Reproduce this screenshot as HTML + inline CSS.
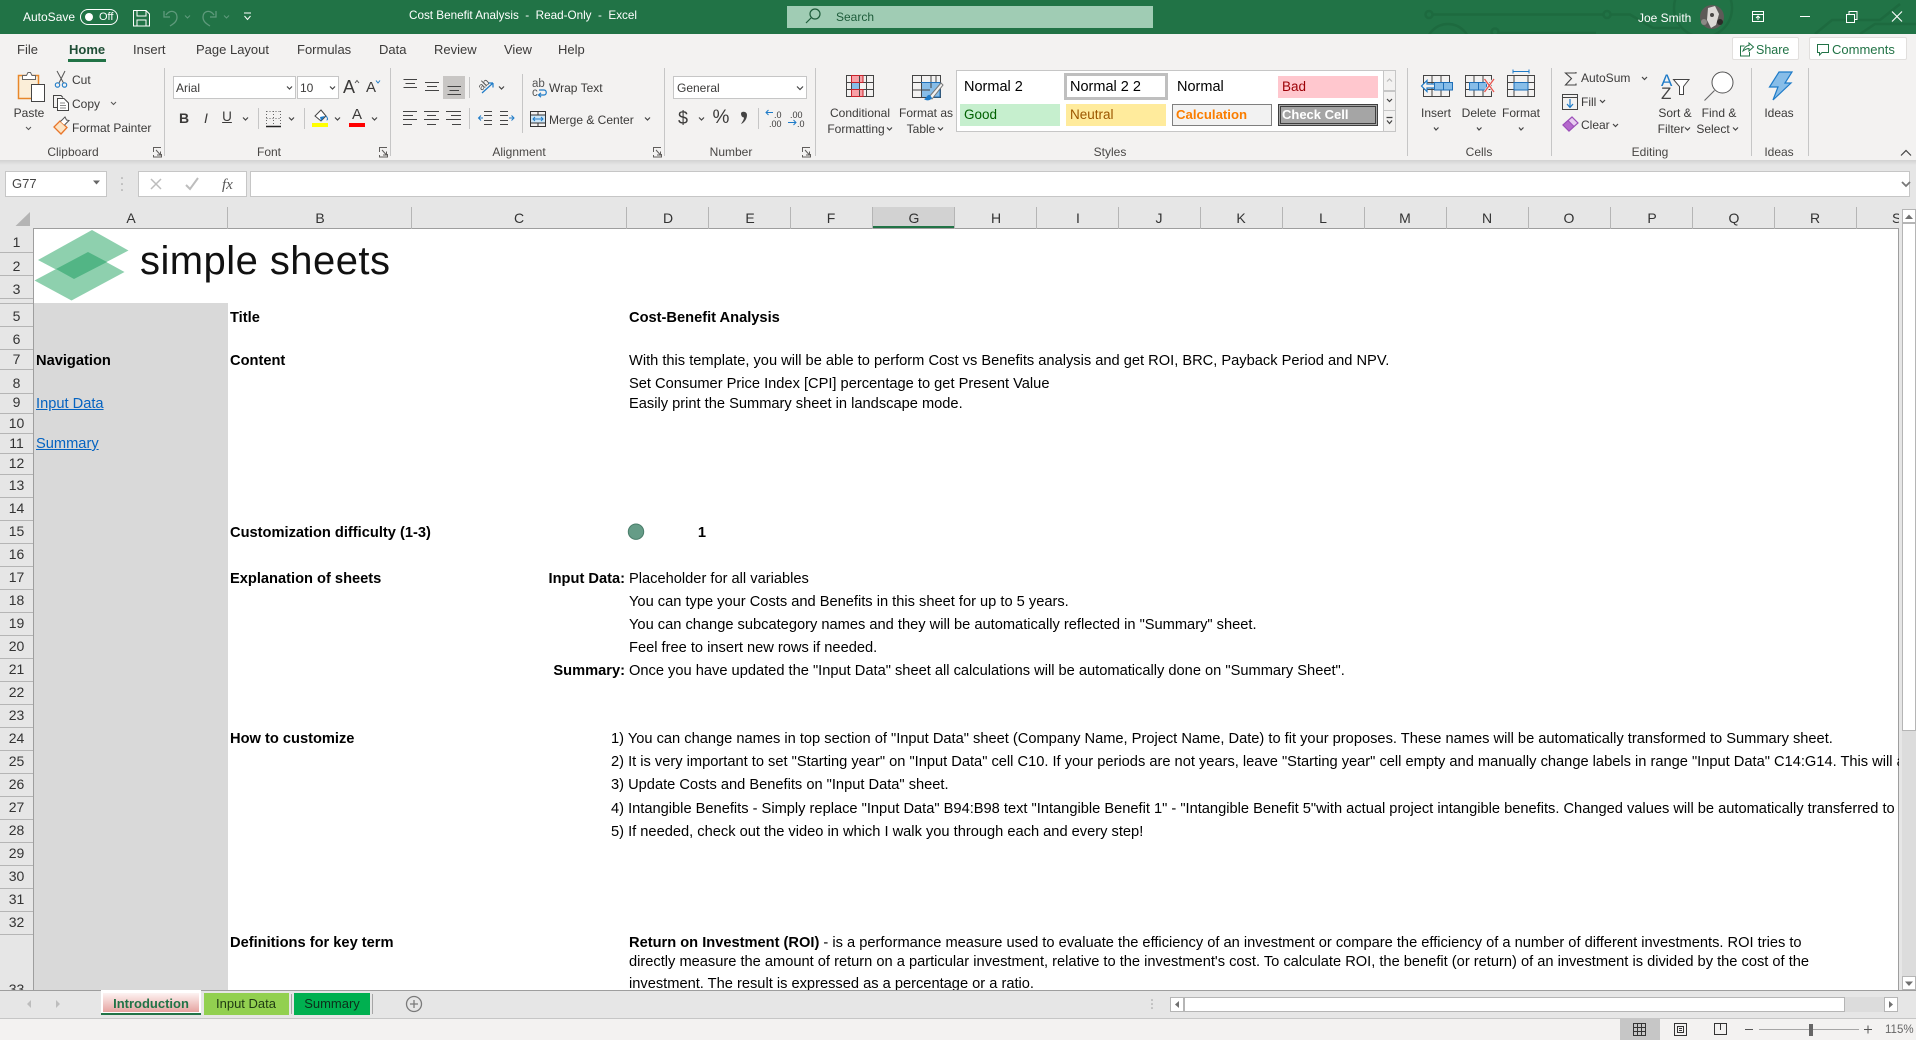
<!DOCTYPE html>
<html><head><meta charset="utf-8"><title>Cost Benefit Analysis</title>
<style>
html,body{margin:0;padding:0;width:1916px;height:1040px;overflow:hidden;background:#e6e6e6;font-family:"Liberation Sans",Arial,sans-serif}
.a{position:absolute}
.t{position:absolute;line-height:16px;white-space:nowrap;font-size:12px;color:#3b3a39}
.c{transform:translateX(-50%)}
.w{color:#fff}
.tab{font-size:13px;top:42px;color:#3b3a39}
.g{font-size:12px;top:144px;color:#484644}
.x{font-size:14.5px;color:#000}
.s{font-size:14.65px;color:#000;line-height:18px}
.h{font-size:14px;color:#333;top:210px}
.r{font-size:14px;color:#333;left:0;width:33px;text-align:center}
.box{position:absolute;background:#fff;border:1px solid #c6c6c6;box-sizing:border-box}
.sep{position:absolute;width:1px;background:#c6c6c6}
.cs{position:absolute;width:1px;top:207px;height:22px;background:#b5b5b5}
.rs{position:absolute;left:0;width:33px;height:1px;background:#b5b5b5}
</style></head><body>

<!-- title bar -->
<div class="a" style="left:0;top:0;width:1916px;height:34px;background:#217346"></div>
<svg class="a" style="left:0;top:0" width="1916" height="34" viewBox="0 0 1916 34" fill="none">
 <g stroke="#1d6a3f" stroke-width="2.5">
  <path d="M1432 14.500H1604M1610 14.500H1630L1653 28L1680 28"/>
  <circle cx="1429" cy="14.500" r="3.500"/><circle cx="1607" cy="14.500" r="3.500"/>
  <circle cx="1448" cy="46" r="22"/><circle cx="1448" cy="46" r="11"/>
  <circle cx="1495" cy="32" r="3.500"/><path d="M1498 33H1596"/>
  <circle cx="1703" cy="8" r="29"/>
  <path d="M1815 34L1832 20H1880L1900 4M1860 34L1875 24H1916"/>
 </g>
</svg>
<!-- ribbon -->
<div class="a" style="left:0;top:34px;width:1916px;height:126px;background:#f3f2f1"></div>
<div class="a" style="left:0;top:160px;width:1916px;height:5px;background:linear-gradient(#d2d2d2,#e6e6e6)"></div>
<!-- search -->
<div class="a" style="left:787px;top:6px;width:366px;height:22px;background:#a0ccb4"></div>

<!-- style gallery -->
<div class="box" style="left:956px;top:70px;width:440px;height:62px"></div>
<div class="a" style="left:960px;top:104px;width:100px;height:22px;background:#c6efce"></div>
<div class="a" style="left:1064px;top:73px;width:104px;height:27px;box-sizing:border-box;border:3px solid #bfbfbf;background:#fff"></div>
<div class="a" style="left:1066px;top:104px;width:100px;height:22px;background:#ffeb9c"></div>
<div class="a" style="left:1172px;top:104px;width:100px;height:22px;box-sizing:border-box;border:1px solid #7f7f7f;background:#f2f2f2"></div>
<div class="a" style="left:1278px;top:76px;width:100px;height:22px;background:#ffc7ce"></div>
<div class="a" style="left:1278px;top:104px;width:100px;height:22px;box-sizing:border-box;border:3px double #3f3f3f;background:#a5a5a5"></div>
<div class="box" style="left:1383px;top:70px;width:13px;height:21px;background:#f3f2f1"></div>
<div class="box" style="left:1383px;top:91px;width:13px;height:20px;background:#f3f2f1"></div>
<div class="box" style="left:1383px;top:110px;width:13px;height:22px;background:#f3f2f1"></div>

<!-- input boxes -->
<div class="box" style="left:173px;top:76px;width:123px;height:23px"></div>
<div class="box" style="left:297px;top:76px;width:42px;height:23px"></div>
<div class="box" style="left:673px;top:76px;width:134px;height:23px"></div>
<div class="a" style="left:443px;top:76px;width:22px;height:23px;background:#c8c6c4"></div>

<!-- separators -->
<div class="sep" style="left:164px;top:68px;height:88px"></div>
<div class="sep" style="left:390px;top:68px;height:88px"></div>
<div class="sep" style="left:664px;top:68px;height:88px"></div>
<div class="sep" style="left:815px;top:68px;height:88px"></div>
<div class="sep" style="left:1407px;top:68px;height:88px"></div>
<div class="sep" style="left:1551px;top:68px;height:88px"></div>
<div class="sep" style="left:1751px;top:68px;height:88px"></div>
<div class="sep" style="left:1808px;top:68px;height:88px"></div>
<div class="sep" style="left:522px;top:74px;height:59px"></div>
<div class="sep" style="left:469px;top:77px;height:21px"></div>
<div class="sep" style="left:469px;top:108px;height:21px"></div>
<div class="sep" style="left:258px;top:108px;height:21px"></div>
<div class="sep" style="left:304px;top:108px;height:21px"></div>
<div class="sep" style="left:758px;top:108px;height:21px"></div>

<!-- share / comments -->
<div class="a" style="left:1732px;top:37px;width:67px;height:23px;background:#fff;border:1px solid #e1dfdd;box-sizing:border-box;border-radius:2px"></div>
<div class="a" style="left:1809px;top:37px;width:98px;height:23px;background:#fff;border:1px solid #e1dfdd;box-sizing:border-box;border-radius:2px"></div>

<!-- formula bar -->
<div class="box" style="left:5px;top:171px;width:102px;height:26px"></div>
<div class="box" style="left:138px;top:171px;width:109px;height:26px"></div>
<div class="box" style="left:250px;top:171px;width:1660px;height:26px"></div>

<!-- grid -->
<div class="a" style="left:33px;top:228px;width:1866px;height:762px;background:#fff;box-sizing:border-box;border:1px solid #9e9e9e;border-width:1px 1px 0 1px"></div>
<div class="a" style="left:34px;top:303px;width:194px;height:687px;background:#d9d9d9"></div>
<div class="a" style="left:872px;top:207px;width:83px;height:21px;background:#d2d2d2"></div>
<div class="a" style="left:872px;top:226px;width:83px;height:2px;background:#217346"></div>

<!-- column separators -->
<div class="cs" style="left:227px"></div><div class="cs" style="left:411px"></div><div class="cs" style="left:626px"></div><div class="cs" style="left:708px"></div><div class="cs" style="left:790px"></div><div class="cs" style="left:872px"></div><div class="cs" style="left:954px"></div><div class="cs" style="left:1036px"></div><div class="cs" style="left:1118px"></div><div class="cs" style="left:1200px"></div><div class="cs" style="left:1282px"></div><div class="cs" style="left:1364px"></div><div class="cs" style="left:1446px"></div><div class="cs" style="left:1528px"></div><div class="cs" style="left:1610px"></div><div class="cs" style="left:1692px"></div><div class="cs" style="left:1774px"></div><div class="cs" style="left:1856px"></div>

<!-- column headers -->
<span class="t h c" style="left:131px">A</span><span class="t h c" style="left:320px">B</span><span class="t h c" style="left:519px">C</span><span class="t h c" style="left:668px">D</span><span class="t h c" style="left:750px">E</span><span class="t h c" style="left:831px">F</span><span class="t h c" style="left:914px">G</span><span class="t h c" style="left:996px">H</span><span class="t h c" style="left:1078px">I</span><span class="t h c" style="left:1159px">J</span><span class="t h c" style="left:1241px">K</span><span class="t h c" style="left:1323px">L</span><span class="t h c" style="left:1405px">M</span><span class="t h c" style="left:1487px">N</span><span class="t h c" style="left:1569px">O</span><span class="t h c" style="left:1652px">P</span><span class="t h c" style="left:1734px">Q</span><span class="t h c" style="left:1815px">R</span>
<div class="a" style="left:1857px;top:207px;width:42px;height:22px;overflow:hidden"><span class="t h" style="left:35px;top:3px">S</span></div>

<!-- row headers -->
<div class="a" style="left:0;top:229px;width:33px;height:761px;overflow:hidden">
<div style="position:relative;top:-229px;height:1000px">
<div class="rs" style="top:252px"></div><div class="rs" style="top:275px"></div><div class="rs" style="top:298px"></div><div class="rs" style="top:303px"></div><div class="rs" style="top:326px"></div><div class="rs" style="top:349px"></div><div class="rs" style="top:369px"></div><div class="rs" style="top:393px"></div><div class="rs" style="top:413px"></div><div class="rs" style="top:433px"></div><div class="rs" style="top:453px"></div><div class="rs" style="top:474px"></div><div class="rs" style="top:497px"></div><div class="rs" style="top:520px"></div><div class="rs" style="top:543px"></div><div class="rs" style="top:566px"></div><div class="rs" style="top:589px"></div><div class="rs" style="top:612px"></div><div class="rs" style="top:635px"></div><div class="rs" style="top:658px"></div><div class="rs" style="top:681px"></div><div class="rs" style="top:704px"></div><div class="rs" style="top:727px"></div><div class="rs" style="top:750px"></div><div class="rs" style="top:773px"></div><div class="rs" style="top:796px"></div><div class="rs" style="top:819px"></div><div class="rs" style="top:842px"></div><div class="rs" style="top:865px"></div><div class="rs" style="top:888px"></div><div class="rs" style="top:911px"></div><div class="rs" style="top:934px"></div>
<span class="t r" style="top:234px">1</span><span class="t r" style="top:258px">2</span><span class="t r" style="top:281px">3</span><span class="t r" style="top:308px">5</span><span class="t r" style="top:331px">6</span><span class="t r" style="top:351px">7</span><span class="t r" style="top:375px">8</span><span class="t r" style="top:394px">9</span><span class="t r" style="top:415px">10</span><span class="t r" style="top:435px">11</span><span class="t r" style="top:455px">12</span><span class="t r" style="top:477px">13</span><span class="t r" style="top:500px">14</span><span class="t r" style="top:523px">15</span><span class="t r" style="top:546px">16</span><span class="t r" style="top:569px">17</span><span class="t r" style="top:592px">18</span><span class="t r" style="top:615px">19</span><span class="t r" style="top:638px">20</span><span class="t r" style="top:661px">21</span><span class="t r" style="top:684px">22</span><span class="t r" style="top:707px">23</span><span class="t r" style="top:730px">24</span><span class="t r" style="top:753px">25</span><span class="t r" style="top:776px">26</span><span class="t r" style="top:799px">27</span><span class="t r" style="top:822px">28</span><span class="t r" style="top:845px">29</span><span class="t r" style="top:868px">30</span><span class="t r" style="top:891px">31</span><span class="t r" style="top:914px">32</span><span class="t r" style="top:981px">33</span>
</div></div>

<!-- cell text -->
<div class="a" style="left:34px;top:229px;width:1865px;height:761px;overflow:hidden">
<div style="position:relative;left:-34px;top:-229px;width:1916px;height:1000px">
<span class="t" style="left:140px;top:240px;font-size:40px;line-height:42px;color:#111;letter-spacing:.45px">simple sheets</span>

<span class="t s" style="left:36px;top:352px"><b>Navigation</b></span>
<span class="t s" style="left:36px;top:395px;color:#0563c1;text-decoration:underline">Input Data</span>
<span class="t s" style="left:36px;top:435px;color:#0563c1;text-decoration:underline">Summary</span>

<span class="t s" style="left:230px;top:309px"><b>Title</b></span>
<span class="t s" style="left:230px;top:352px"><b>Content</b></span>
<span class="t s" style="left:230px;top:524px"><b>Customization difficulty (1-3)</b></span>
<span class="t s" style="left:230px;top:570px"><b>Explanation of sheets</b></span>
<span class="t s" style="left:230px;top:730px"><b>How to customize</b></span>
<span class="t s" style="left:230px;top:934px"><b>Definitions for key term</b></span>

<span class="t s" style="left:629px;top:309px"><b>Cost-Benefit Analysis</b></span>
<span class="t s" style="left:629px;top:352px">With this template, you will be able to perform Cost vs Benefits analysis and get ROI, BRC, Payback Period and NPV.</span>
<span class="t s" style="left:629px;top:375px">Set Consumer Price Index [CPI] percentage to get Present Value</span>
<span class="t s" style="left:629px;top:395px">Easily print the Summary sheet in landscape mode.</span>
<span class="t s c" style="left:702px;top:524px"><b>1</b></span>

<span class="t s" style="right:1291px;top:570px"><b>Input Data:</b></span>
<span class="t s" style="left:629px;top:570px">Placeholder for all variables</span>
<span class="t s" style="left:629px;top:593px">You can type your Costs and Benefits in this sheet for up to 5 years.</span>
<span class="t s" style="left:629px;top:616px">You can change subcategory names and they will be automatically reflected in "Summary" sheet.</span>
<span class="t s" style="left:629px;top:639px">Feel free to insert new rows if needed.</span>
<span class="t s" style="right:1291px;top:662px"><b>Summary:</b></span>
<span class="t s" style="left:629px;top:662px">Once you have updated the "Input Data" sheet all calculations will be automatically done on "Summary Sheet".</span>

<span class="t s" style="left:611px;top:730px">1) You can change names in top section of "Input Data" sheet (Company Name, Project Name, Date) to fit your proposes. These names will be automatically transformed to Summary sheet.</span>
<span class="t s" style="left:611px;top:753px">2) It is very important to set "Starting year" on "Input Data" cell C10. If your periods are not years, leave "Starting year" cell empty and manually change labels in range "Input Data" C14:G14. This will automatically</span>
<span class="t s" style="left:611px;top:776px">3) Update Costs and Benefits on "Input Data" sheet.</span>
<span class="t s" style="left:611px;top:800px">4) Intangible Benefits - Simply replace "Input Data" B94:B98 text "Intangible Benefit 1" - "Intangible Benefit 5"with actual project intangible benefits. Changed values will be automatically transferred to "Summary" sheet.</span>
<span class="t s" style="left:611px;top:823px">5) If needed, check out the video in which I walk you through each and every step!</span>

<span class="t s" style="left:629px;top:934px"><b>Return on Investment (ROI)</b> - is a performance measure used to evaluate the efficiency of an investment or compare the efficiency of a number of different investments. ROI tries to</span>
<span class="t s" style="left:629px;top:953px">directly measure the amount of return on a particular investment, relative to the investment's cost. To calculate ROI, the benefit (or return) of an investment is divided by the cost of the</span>
<span class="t s" style="left:629px;top:975px">investment. The result is expressed as a percentage or a ratio.</span>
</div></div>

<!-- scrollbars & tab bar -->
<div class="a" style="left:1902px;top:209px;width:14px;height:781px;background:#dcdcdc"></div>
<div class="a" style="left:1902px;top:209px;width:14px;height:14px;background:#fff;border:1px solid #b5b5b5;box-sizing:border-box"></div>
<div class="a" style="left:1902px;top:223px;width:14px;height:508px;background:#fff;border:1px solid #b5b5b5;box-sizing:border-box"></div>
<div class="a" style="left:1902px;top:976px;width:14px;height:14px;background:#fff;border:1px solid #b5b5b5;box-sizing:border-box"></div>
<div class="a" style="left:0;top:990px;width:1916px;height:1px;background:#9e9e9e"></div>
<div class="a" style="left:0;top:991px;width:1916px;height:27px;background:#e6e6e6"></div>
<div class="a" style="left:0;top:1018px;width:1916px;height:1px;background:#c6c6c6"></div>
<div class="a" style="left:0;top:1019px;width:1916px;height:21px;background:#f3f2f1"></div>
<div class="a" style="left:1620px;top:1019px;width:40px;height:21px;background:#c6c6c6"></div>

<div class="a" style="left:101px;top:990px;width:100px;height:25px;background:#fff;border-bottom:2px solid #217346;box-sizing:border-box"></div>
<div class="a" style="left:103px;top:993px;width:96px;height:19px;background:linear-gradient(#fdf3f2,#e6a3a0)"></div>
<div class="a" style="left:204px;top:993px;width:85px;height:22px;background:#92d050"></div>
<div class="a" style="left:294px;top:993px;width:76px;height:22px;background:#00b050"></div>
<div class="a" style="left:291px;top:994px;width:1px;height:20px;background:#a6a6a6"></div>
<div class="a" style="left:372px;top:994px;width:1px;height:20px;background:#a6a6a6"></div>
<span class="t c" style="left:151px;top:996px;font-weight:bold;color:#217346;font-size:13px">Introduction</span>
<span class="t c" style="left:246px;top:996px;color:#1f3a12;font-size:13px">Input Data</span>
<span class="t c" style="left:332px;top:996px;color:#0c2e1a;font-size:13px">Summary</span>

<div class="a" style="left:1170px;top:997px;width:14px;height:15px;background:#fff;border:1px solid #b5b5b5;box-sizing:border-box"></div>
<div class="a" style="left:1184px;top:997px;width:661px;height:15px;background:#fff;border:1px solid #b5b5b5;box-sizing:border-box"></div>
<div class="a" style="left:1845px;top:997px;width:39px;height:15px;background:#dcdcdc"></div>
<div class="a" style="left:1884px;top:997px;width:14px;height:15px;background:#fff;border:1px solid #b5b5b5;box-sizing:border-box"></div>

<!-- all icons -->
<svg class="a" style="left:0;top:0" width="1916" height="1040" viewBox="0 0 1916 1040" fill="none">
 <!-- autosave toggle -->
 <rect x="80.500" y="9.500" width="37" height="15" rx="7.500" stroke="#fff"/>
 <circle cx="89" cy="17" r="4" fill="#fff"/>
 <!-- save -->
 <path d="M133.500 10.500H146L149.500 14V26H133.500ZM137 10.500V16H146V10.500M137 26V20H146V26" stroke="#fff"/>
 <!-- undo redo -->
 <path d="M166 15C170 9 177 11 177 17C177 22 173 24 170 26M164 11V17H170" stroke="#5f9a7c" stroke-width="1.300"/>
 <path d="M214 15C210 9 203 11 203 17C203 22 207 24 210 26M216 11V17H210" stroke="#5f9a7c" stroke-width="1.300"/>
 <path d="M185 15.500L187.500 18L190 15.500M224 15.500L226.500 18L229 15.500" stroke="#5f9a7c"/>
 <path d="M244 13H251M244.500 16L247.500 19.500L250.500 16" stroke="#fff"/>
 <!-- search icon -->
 <circle cx="815" cy="14" r="5" stroke="#1d5c3a" stroke-width="1.200"/><path d="M811 18L806 23" stroke="#1d5c3a" stroke-width="1.200"/>
 <!-- avatar -->
 <circle cx="1712" cy="17" r="12" fill="#5d5a58"/>
 <path d="M1708 8L1715 6L1719 14L1716 25L1711 28L1707 20Z" fill="#dcd9d6"/>
 <circle cx="1704" cy="22" r="3" fill="#8c8986"/><circle cx="1720" cy="22" r="3" fill="#2c2a28"/><circle cx="1712" cy="15" r="2" fill="#4a4846"/>
 <!-- window controls -->
 <path d="M1752.500 11.500H1763.500V21.500H1752.500ZM1752.500 14.500H1763.500M1758 20V16M1756 18L1758 16L1760 18" stroke="#fff"/>
 <path d="M1800 16.500H1810" stroke="#fff"/>
 <path d="M1846.500 14.500H1854.500V22.500H1846.500ZM1849 14V11.500H1857V19.500H1855" stroke="#fff"/>
 <path d="M1892 11.500L1902 21.500M1902 11.500L1892 21.500" stroke="#fff" stroke-width="1.100"/>
 <!-- share / comments icons -->
 <path d="M1744.500 46H1740.500V56H1749.500V52M1743 51C1744 47.500 1746.500 45.500 1749 45.500V43L1753.500 47L1749 51V48.500C1746.500 48.500 1745 49.500 1743 51Z" stroke="#217346"/>
 <path d="M1817.500 44.500H1828.500V52.500H1822L1819.500 55V52.500H1817.500Z" stroke="#217346"/>

 <!-- paste -->
 <rect x="18.500" y="75.500" width="20" height="23" fill="#fbeed8" stroke="#e8872a" stroke-width="1.500"/>
 <rect x="31.500" y="84.500" width="13" height="17" fill="#fff" stroke="#444"/>
 <path d="M22.500 79.500V75.500H26.500L28 72.500H30.500L32 75.500H35.500V79.500Z" fill="#fff" stroke="#666"/>
 <path d="M26 127L28.500 129.500L31 127" stroke="#555"/>
 <!-- scissors -->
 <path d="M57 71L63.500 83M65 71L59 83" stroke="#555"/>
 <circle cx="57.500" cy="85" r="2.200" stroke="#1e7bc8" stroke-width="1.100"/><circle cx="64.500" cy="85" r="2.200" stroke="#1e7bc8" stroke-width="1.100"/>
 <!-- copy -->
 <path d="M57 107.500H53.500V95.500H61L63 97.500" stroke="#444"/>
 <path d="M57.500 98.500H64L68.500 103V110.500H57.500Z" fill="#fff" stroke="#444"/>
 <path d="M60 103H65M60 105.500H66M60 108H66" stroke="#888"/>
 <path d="M111 102L113.500 104.500L116 102" stroke="#555"/>
 <!-- format painter -->
 <path d="M54 127L60 121L67 127.500L61 134Z" fill="#fce4c5" stroke="#e8762a" stroke-width="1.300"/>
 <path d="M60.500 121.500L65 117L66.500 120L69 120.500L64.500 125" fill="#fff" stroke="#555"/>
 <!-- launchers -->
 <g stroke="#605e5c">
  <path d="M153.500 152V147.500H161M156 150L160.500 155M160.500 151.500V155H157M161.500 154V157H153.500V155"/>
  <path d="M379.500 152V147.500H387M382 150L386.500 155M386.500 151.500V155H383M387.500 154V157H379.500V155"/>
  <path d="M653.500 152V147.500H661M656 150L660.500 155M660.500 151.500V155H657M661.500 154V157H653.500V155"/>
  <path d="M802.500 152V147.500H810M805 150L809.500 155M809.500 151.500V155H806M810.500 154V157H802.500V155"/>
 </g>
 <!-- dropdown chevrons -->
 <g stroke="#444" stroke-width="1.200">
  <path d="M287 86.500L289.500 89L292 86.500"/>
  <path d="M330 86.500L332.500 89L335 86.500"/>
  <path d="M797 86.500L800 89.500L803 86.500"/>
  <path d="M243 117.500L245.500 120L248 117.500"/>
  <path d="M289 117.500L291.500 120L294 117.500"/>
  <path d="M335 117.500L337.500 120L340 117.500"/>
  <path d="M372 117.500L374.500 120L377 117.500"/>
  <path d="M499 86.500L501.500 89L504 86.500"/>
  <path d="M645 117.500L647.500 120L650 117.500"/>
  <path d="M699 117.500L701.500 120L704 117.500"/>
  <path d="M887 127.500L889.500 130L892 127.500"/>
  <path d="M938 127.500L940.500 130L943 127.500"/>
  <path d="M1434 127.500L1436 130L1438.500 127.500"/>
  <path d="M1477 127.500L1479 130L1481.500 127.500"/>
  <path d="M1519 127.500L1521 130L1523.500 127.500"/>
  <path d="M1642 77L1644.500 79.500L1647 77"/>
  <path d="M1600 100L1602.500 102.500L1605 100"/>
  <path d="M1613 124L1615.500 126.500L1618 124"/>
  <path d="M1685 127.500L1687.500 130L1690 127.500"/>
  <path d="M1733 127.500L1735.500 130L1738 127.500"/>
 </g>
 <path d="M1901 155.500L1906 150.500L1911 155.500" stroke="#444" stroke-width="1.200"/>
 <!-- font grow / shrink -->
 <path d="M355 83L357 80.500L359 83" stroke="#555"/><path d="M376 80.500L378 83L380 80.500" stroke="#1e7bc8"/>
 <!-- border icon -->
 <path d="M266.500 111V126M280.500 111V126M266.500 111.500H281M266.500 118.500H281M273.500 111V126" stroke="#666" stroke-dasharray="1 2"/>
 <path d="M266 126.500H281" stroke="#222" stroke-width="1.500"/>
 <!-- fill color -->
 <path d="M315 116L321 110L326 116L321 121Z" fill="#fff" stroke="#444"/><path d="M320 117L325 116L321 121Z" fill="#1e7bc8"/><path d="M326 116C328 118 328 120 326.500 120" stroke="#1e7bc8"/>
 <rect x="312" y="123" width="16" height="4" fill="#ff0"/>
 <rect x="349" y="123" width="16" height="4" fill="#f00"/>
 <!-- alignment -->
 <g stroke="#444" stroke-width="1.100">
  <path d="M403.500 79.500H417M405.500 83.500H415M403.500 87.500H417"/>
  <path d="M425 82.500H439M427 86.500H437M425 90.500H439"/>
  <path d="M447.500 86.500H461M449.500 90.500H459M447.500 94.500H461"/>
  <path d="M403 111.500H417M403 115.500H413M403 119.500H417M403 124.500H412"/>
  <path d="M424 111.500H439M427 115.500H436M424 119.500H439M427 124.500H436"/>
  <path d="M446 111.500H461M451 115.500H461M446 119.500H461M452 124.500H461"/>
  <path d="M484 111.500H492M484 115.500H492M484 120.500H492M484 124.500H492"/>
  <path d="M506 111.500H514M506 115.500H514M506 120.500H514M506 124.500H514" transform="translate(-6,0)"/>
 </g>
 <path d="M483 118H478.500M481 115.500L478.500 118L481 120.500" stroke="#1e7bc8"/>
 <path d="M509 118H514M511.500 115.500L514 118L511.500 120.500" stroke="#1e7bc8"/>
 <!-- orientation -->
 <path d="M482 93L493 83M493 83H488.500M493 83V87.500" stroke="#1e7bc8" stroke-width="1.200"/>
 <text x="478" y="90" font-family="Liberation Sans" font-size="10.500" fill="#555" transform="rotate(-45 481 86)">ab</text>
 <!-- wrap text -->
 <text x="532" y="87" font-family="Liberation Sans" font-size="11.500" fill="#555">ab</text>
 <text x="532" y="96" font-family="Liberation Sans" font-size="11.500" fill="#555">c</text>
 <path d="M539 90H544C547 90 547 95 544 95H539M541 92.800L538.500 95L541 97.200" stroke="#1e7bc8" stroke-width="1.200"/>
 <!-- merge -->
 <rect x="530.500" y="111.500" width="15" height="15" stroke="#333"/><rect x="531" y="115" width="14" height="8" fill="#cde6f7"/>
 <path d="M531 115H545M531 123H545M538 112V115M538 123V126" stroke="#333"/>
 <path d="M533 119H543M535 117L533 119L535 121M541 117L543 119L541 121" stroke="#1e7bc8"/>
 <!-- comma -->
 <path d="M741 113.500C741 111 747 111 747 115C747 119 744 123 741 124C743 121 744 119 744 117.500C742 117.500 741 115.500 741 113.500Z" fill="#444"/>
 <!-- decimal arrows -->
 <path d="M766 112.500H773M768.500 110L766 112.500L768.500 115" stroke="#1e7bc8"/>
 <path d="M788 122.500H796M793.500 120L796 122.500L793.500 125" stroke="#1e7bc8"/>
 <!-- conditional formatting -->
 <g>
  <rect x="851" y="75" width="12" height="7.500" fill="#f8a0a6"/><rect x="851" y="89.500" width="12" height="7.500" fill="#f8a0a6"/><rect x="851" y="82.500" width="8" height="7" fill="#87bde8"/>
  <path d="M846.500 75.500H873.500V96.500H846.500ZM846.500 82.500H873.500M846.500 89.500H873.500M851.500 75.500V96.500M859.500 75.500V96.500M866.500 75.500V96.500" stroke="#444"/>
  <path d="M851.500 75.500H863V82.500H851.500ZM851.500 89.500H863V96.500H851.500Z" stroke="#c8232c"/>
 </g>
 <!-- format as table -->
 <g>
  <rect x="921" y="82" width="19" height="15" fill="#87bde8"/>
  <path d="M912.500 75.500H940.500V97.500H912.500ZM912.500 82.500H940.500M912.500 90H930M921.500 75.500V97.500M931 75.500V88M936 75.500V82" stroke="#444"/>
  <path d="M921 82.500H940M940 82.500V97H931" stroke="#1e6fb8"/>
  <path d="M929 97L941 83L943 85L932 99Z" fill="#f3f2f1" stroke="#777"/>
  <path d="M924 99C927 98 927 94 930 95L932 98C930 101 926 101 924 99Z" fill="#1e7bc8"/>
 </g>
 <!-- gallery arrows -->
 <path d="M1387 81.500L1389.500 79L1392 81.500" stroke="#bbb" stroke-width="1.200"/>
 <path d="M1387 99L1389.500 101.500L1392 99" stroke="#444" stroke-width="1.200"/>
 <path d="M1386.500 117.500H1392.500M1387 120.500L1389.500 123.500L1392 120.500" stroke="#444" stroke-width="1.200"/>
 <!-- insert -->
 <path d="M1423.500 75.500H1449.500V96.500H1423.500ZM1423.500 82.500H1449.500M1423.500 89.500H1449.500M1432 75.500V96.500M1441 75.500V96.500" stroke="#444"/>
 <rect x="1434.500" y="82.500" width="18" height="7.500" fill="#87bde8" stroke="#1e6fb8"/><path d="M1443.500 82V90" stroke="#1e6fb8"/>
 <path d="M1434 84H1427V80.500L1421.500 86L1427 91.500V88H1434" stroke="#1e7bc8" stroke-width="1.200" fill="#f3f2f1"/>
 <!-- delete -->
 <path d="M1465.500 75.500H1491.500V96.500H1465.500ZM1465.500 82.500H1491.500M1465.500 89.500H1491.500M1474 75.500V96.500M1483 75.500V96.500" stroke="#444"/>
 <rect x="1469.500" y="82.500" width="17" height="7.500" fill="#87bde8" stroke="#1e6fb8"/><path d="M1478.500 82.500V90" stroke="#1e6fb8"/>
 <path d="M1485 79L1494 92M1494 79L1485 92" stroke="#f3f2f1" stroke-width="3"/>
 <path d="M1484.500 79L1494 92M1494 79L1484.500 92" stroke="#e8544f" stroke-width="1.300"/>
 <!-- format -->
 <path d="M1507.500 75.500H1534.500V96.500H1507.500ZM1507.500 82.500H1534.500M1507.500 89.500H1534.500M1514 75.500V96.500M1528 75.500V96.500" stroke="#444"/>
 <rect x="1514" y="82.500" width="14" height="7.500" fill="#87bde8" stroke="#1e6fb8"/>
 <path d="M1513 71.500H1529M1513 69.500V73.500M1529 69.500V73.500" stroke="#1e7bc8"/>
 <!-- sigma -->
 <path d="M1576 72V73H1565.500L1571.500 78.500L1565.500 85H1576V83.500" stroke="#444" stroke-width="1.100"/>
 <!-- fill -->
 <path d="M1562.500 94.500H1577.500V109.500H1562.500ZM1562.500 97.500H1577.500" stroke="#444"/>
 <path d="M1570 99V107M1567 104L1570 107.500L1573 104" stroke="#1e7bc8" stroke-width="1.200"/>
 <!-- clear -->
 <path d="M1563 125L1572 117L1578 123L1569 131Z" fill="#e8cdf0" stroke="#9b4fb8" stroke-width="1.200"/>
 <path d="M1563 125L1568 120.500L1574 126.500L1569 131Z" fill="#b468cc" stroke="#9b4fb8"/>
 <!-- sort & filter -->
 <text x="1661" y="86" font-family="Liberation Sans" font-size="17" fill="#1e7bc8">A</text>
 <text x="1661" y="99" font-family="Liberation Sans" font-size="17" fill="#444">Z</text>
 <path d="M1673.500 79.500H1689L1683.500 86.500V94.500H1679.500V86.500Z" stroke="#444" fill="#fff"/>
 <!-- find -->
 <circle cx="1722.500" cy="82.500" r="10.500" stroke="#555" fill="#fff"/>
 <path d="M1714.500 90.500L1704.500 100.500" stroke="#666" stroke-width="1.100"/>
 <!-- ideas -->
 <path d="M1779 72H1792L1785 83H1791L1773 100L1778 87H1769.500Z" fill="#87bde8" stroke="#1e7bc8" stroke-width="1.200"/>
 <!-- name box / formula -->
 <path d="M93 180.500H100L96.500 184.500Z" fill="#666"/>
 <circle cx="122" cy="178" r=".8" fill="#999"/><circle cx="122" cy="184" r=".8" fill="#999"/><circle cx="122" cy="190" r=".8" fill="#999"/>
 <path d="M151 179L161 189M161 179L151 189" stroke="#bdbdbd" stroke-width="1.500"/>
 <path d="M186 185L190 189L198 178" stroke="#bdbdbd" stroke-width="2"/>
 <text x="222" y="189" font-family="Liberation Serif" font-style="italic" font-size="15" fill="#555">fx</text>
 <path d="M1902 182L1906 186L1910 182" stroke="#777" stroke-width="1.800"/>
 <!-- corner -->
 <path d="M15.500 226H30V212Z" fill="#b4b4b4"/>
 <!-- logo -->
 <path d="M92 230L128.500 250.500L74 279L38 260Z" fill="#8ed0ae"/>
 <path d="M88 252L124.500 272L71.500 300.500L34.500 280.500Z" fill="#8ed0ae"/>
 <path d="M88 252L107 262L74 279L56 269Z" fill="#52b585"/>
 <!-- circle -->
 <circle cx="636" cy="531.700" r="7.700" fill="#659c87" stroke="#4a7d6a"/>
 <!-- scroll arrows -->
 <path d="M1905 219H1913L1909 214.500Z" fill="#707070"/>
 <path d="M1905 981.500H1913L1909 986Z" fill="#707070"/>
 <path d="M1179 1001L1175 1004.500L1179 1008Z" fill="#707070"/>
 <path d="M1889 1001L1893 1004.500L1889 1008Z" fill="#707070"/>
 <!-- sheet nav -->
 <path d="M31 1000L27 1004L31 1008Z" fill="#bdbdbd"/><path d="M56 1000L60 1004L56 1008Z" fill="#bdbdbd"/>
 <circle cx="414" cy="1004" r="7.500" stroke="#7a7a7a" stroke-width="1.300"/><path d="M410 1004H418M414 1000V1008" stroke="#7a7a7a" stroke-width="1.300"/>
 <g fill="#9a9a9a"><circle cx="1152" cy="1000" r=".8"/><circle cx="1152" cy="1004" r=".8"/><circle cx="1152" cy="1008" r=".8"/></g>
 <!-- status icons -->
 <path d="M1633.500 1023.500H1645.500V1035.500H1633.500ZM1633.500 1027.500H1645.500M1633.500 1031.500H1645.500M1637.500 1023.500V1035.500M1641.500 1023.500V1035.500" stroke="#333"/>
 <path d="M1674.500 1023.500H1686.500V1035.500H1674.500ZM1677.500 1026.500H1683.500V1032.500H1677.500ZM1679 1028.500H1682M1679 1030.500H1682" stroke="#333"/>
 <path d="M1714.500 1023.500H1726.500V1034.500H1714.500ZM1720.500 1023.500V1030" stroke="#333"/>
 <path d="M1745 1029.500H1753M1864 1029.500H1872M1868 1025.500V1033.500" stroke="#555"/>
 <path d="M1759 1029.500H1859" stroke="#a6a6a6"/>
 <rect x="1809" y="1024" width="4" height="12" fill="#666"/>
</svg>

<!-- text: title bar -->
<span class="t w" style="left:23px;top:9px;font-size:12px">AutoSave</span>
<span class="t w" style="left:99px;top:9px;font-size:11px">Off</span>
<span class="t w" style="left:409px;top:8px;font-size:11.700px;white-space:pre">Cost Benefit Analysis  -  Read-Only  -  Excel</span>
<span class="t" style="left:836px;top:9px;font-size:12px;color:#1d5c3a">Search</span>
<span class="t w" style="left:1638px;top:10px;font-size:12px">Joe Smith</span>

<!-- tabs -->
<span class="t tab" style="left:17px">File</span>
<span class="t tab" style="left:69px;color:#1f4e36;font-weight:600">Home</span>
<span class="t tab" style="left:133px">Insert</span>
<span class="t tab" style="left:196px">Page Layout</span>
<span class="t tab" style="left:297px">Formulas</span>
<span class="t tab" style="left:379px">Data</span>
<span class="t tab" style="left:434px">Review</span>
<span class="t tab" style="left:504px">View</span>
<span class="t tab" style="left:558px">Help</span>
<div class="a" style="left:68px;top:59px;width:38px;height:3px;background:#217346"></div>
<span class="t" style="left:1756px;top:42px;font-size:12.500px;color:#217346">Share</span>
<span class="t" style="left:1832px;top:42px;font-size:13px;color:#217346">Comments</span>

<!-- ribbon text -->
<span class="t c" style="left:29px;top:105px">Paste</span>
<span class="t" style="left:72px;top:72px">Cut</span>
<span class="t" style="left:72px;top:96px">Copy</span>
<span class="t" style="left:72px;top:120px">Format Painter</span>
<span class="t" style="left:176px;top:80px">Arial</span>
<span class="t" style="left:300px;top:80px">10</span>
<span class="t" style="left:343px;top:79px;font-size:18px">A</span>
<span class="t" style="left:366px;top:80px;font-size:15px">A</span>
<span class="t c" style="left:184px;top:110px;font-size:14px;font-weight:bold">B</span>
<span class="t c" style="left:206px;top:110px;font-size:14px;font-style:italic">I</span>
<span class="t c" style="left:227px;top:109px;font-size:13.500px;text-decoration:underline">U</span>
<span class="t" style="left:352px;top:107px;font-size:15px">A</span>
<span class="t" style="left:549px;top:80px">Wrap Text</span>
<span class="t" style="left:549px;top:112px">Merge &amp; Center</span>
<span class="t" style="left:677px;top:80px">General</span>
<span class="t c" style="left:683px;top:110px;font-size:18px">$</span>
<span class="t c" style="left:721px;top:110px;font-size:19px">%</span>
<span class="t" style="left:774px;top:107px;font-size:9px">.0</span>
<span class="t" style="left:769px;top:116px;font-size:9px">.00</span>
<span class="t" style="left:790px;top:107px;font-size:9px">.00</span>
<span class="t" style="left:797px;top:116px;font-size:9px">.0</span>
<span class="t c" style="left:860px;top:105px">Conditional</span>
<span class="t c" style="left:856px;top:121px">Formatting</span>
<span class="t c" style="left:926px;top:105px">Format as</span>
<span class="t c" style="left:921px;top:121px">Table</span>

<span class="t x" style="left:964px;top:79px">Normal 2</span>
<span class="t x" style="left:1070px;top:79px">Normal 2 2</span>
<span class="t x" style="left:1177px;top:79px">Normal</span>
<span class="t" style="left:1282px;top:79px;font-size:13.500px;color:#9c0006">Bad</span>
<span class="t" style="left:964px;top:107px;font-size:13.500px;color:#006100">Good</span>
<span class="t" style="left:1070px;top:107px;font-size:13.500px;color:#9c5700">Neutral</span>
<span class="t" style="left:1176px;top:107px;font-size:13.200px;font-weight:bold;color:#fa7d00">Calculation</span>
<span class="t" style="left:1282px;top:107px;font-size:13px;font-weight:bold;color:#fff">Check Cell</span>

<span class="t c" style="left:1436px;top:105px">Insert</span>
<span class="t c" style="left:1479px;top:105px">Delete</span>
<span class="t c" style="left:1521px;top:105px">Format</span>
<span class="t" style="left:1581px;top:70px">AutoSum</span>
<span class="t" style="left:1581px;top:94px">Fill</span>
<span class="t" style="left:1581px;top:117px">Clear</span>
<span class="t c" style="left:1675px;top:105px">Sort &amp;</span>
<span class="t c" style="left:1671px;top:121px">Filter</span>
<span class="t c" style="left:1719px;top:105px">Find &amp;</span>
<span class="t c" style="left:1713px;top:121px">Select</span>
<span class="t c" style="left:1779px;top:105px">Ideas</span>

<span class="t g c" style="left:73px">Clipboard</span>
<span class="t g c" style="left:269px">Font</span>
<span class="t g c" style="left:519px">Alignment</span>
<span class="t g c" style="left:731px">Number</span>
<span class="t g c" style="left:1110px">Styles</span>
<span class="t g c" style="left:1479px">Cells</span>
<span class="t g c" style="left:1650px">Editing</span>
<span class="t g c" style="left:1779px">Ideas</span>

<span class="t" style="left:12px;top:176px;font-size:13px;color:#444">G77</span>
<span class="t" style="left:1885px;top:1022px;font-size:11.500px;color:#666">115%</span>
</body></html>
